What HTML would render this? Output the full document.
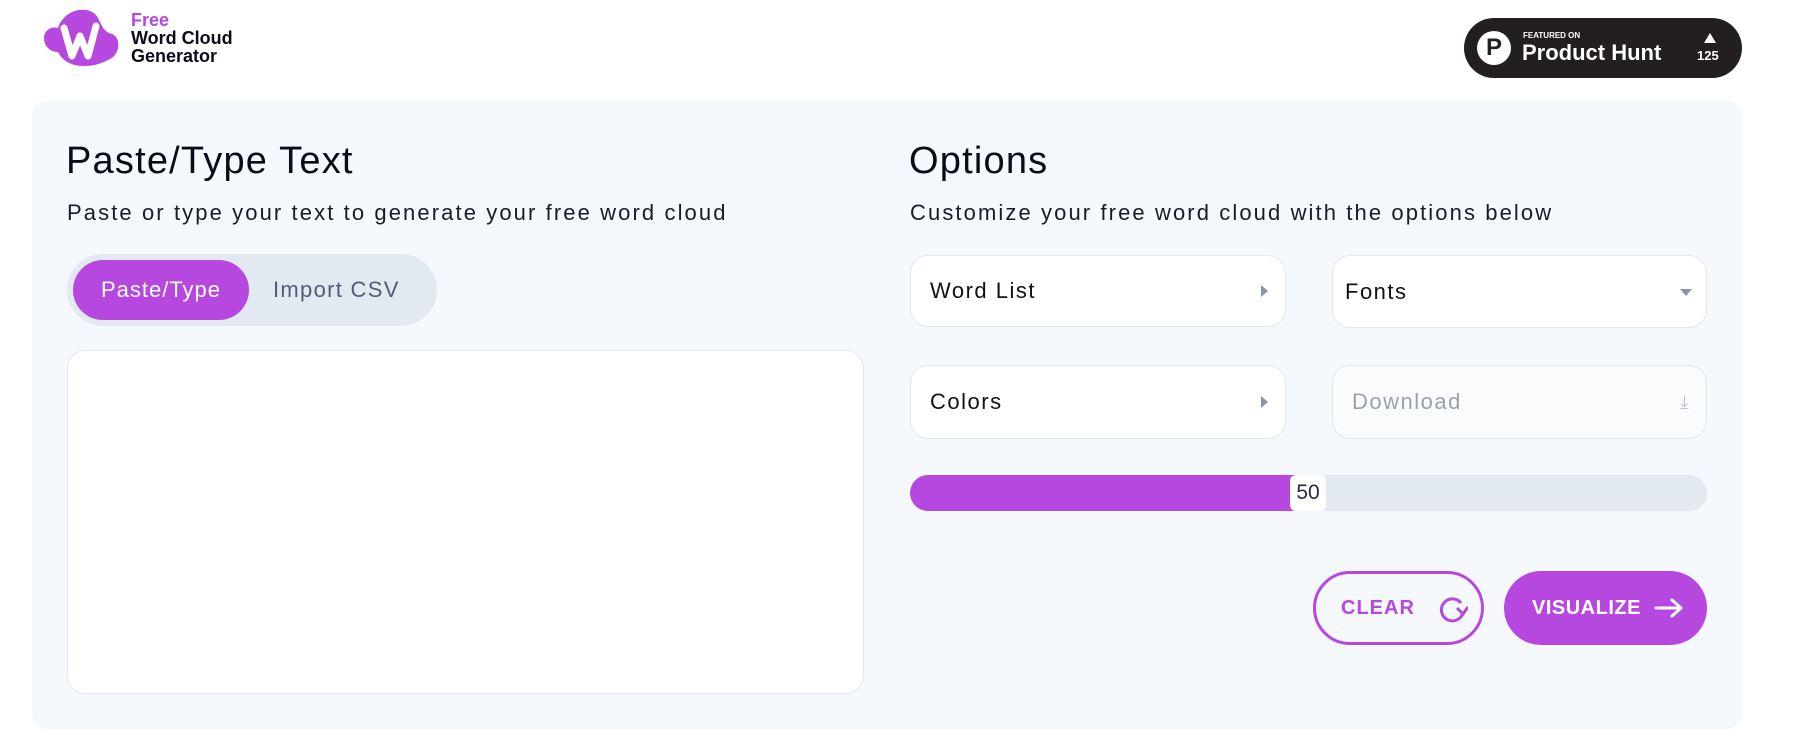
<!DOCTYPE html>
<html><head><meta charset="utf-8"><style>
*{box-sizing:border-box;margin:0;padding:0}
body{width:1806px;height:751px;background:#fff;font-family:"Liberation Sans",sans-serif;position:relative;overflow:hidden;color:#111}
.a{position:absolute}
.panel{left:32px;top:101px;width:1710px;height:628px;background:#f5f8fc;border-radius:14px}
h2{font-weight:500;font-size:38px;color:#0b0b1a;letter-spacing:1.2px}
.sub{font-size:22px;color:#1a1a2a;letter-spacing:2.1px}
.box{background:#fff;border:1px solid #e3e8ef;border-radius:18px;font-size:22px;padding-left:19px;display:flex;align-items:center;letter-spacing:1.5px}
.tri{position:absolute;right:17px;top:50%;margin-top:-6px;width:0;height:0;border-top:6px solid transparent;border-bottom:6px solid transparent;border-left:7px solid #8a94a3}
</style></head><body>
<svg class="a" style="left:42px;top:8px" width="78" height="60" viewBox="0 0 78 60">
<path d="M22 10 C30 0 50 -2 56 10 C60 18 62 24 70 26 C80 30 78 48 66 52 C58 56 52 58 42 58 C28 58 20 52 16 44 C8 44 2 38 2 30 C2 22 10 18 16 20 C17 16 19 13 22 10Z" fill="#b648e0"/>
<path d="M22 20 L30 48 L38 28 L46 48 L54 18" fill="none" stroke="#fff" stroke-width="7" stroke-linecap="round" stroke-linejoin="round"/>
</svg>
<div class="a" style="left:131px;top:11px;font-weight:bold;font-size:18px;line-height:18px;color:#b648e0">Free</div>
<div class="a" style="left:131px;top:29px;font-weight:bold;font-size:18px;line-height:18px;color:#0b0b1a">Word Cloud<br>Generator</div>
<div class="a" style="left:1464px;top:18px;width:278px;height:60px;background:#231f20;border-radius:30px"></div>
<div class="a" style="left:1477px;top:31px;width:34px;height:34px;border-radius:50%;background:#fff;color:#231f20;font-weight:bold;font-size:24px;text-align:center;line-height:34px">P</div>
<div class="a" style="left:1523px;top:31px;color:#fff;font-weight:bold;font-size:8px">FEATURED ON</div>
<div class="a" style="left:1522px;top:40px;color:#fff;font-weight:bold;font-size:22px">Product Hunt</div>
<div class="a" style="left:1704px;top:33px;width:0;height:0;border-left:6px solid transparent;border-right:6px solid transparent;border-bottom:10px solid #fff"></div>
<div class="a" style="left:1697px;top:48px;color:#fff;font-weight:bold;font-size:13px">125</div>

<div class="a panel"></div>
<h2 class="a" style="left:66px;top:140px">Paste/Type Text</h2>
<div class="a sub" style="left:67px;top:200px">Paste or type your text to generate your free word cloud</div>
<div class="a" style="left:67px;top:254px;width:370px;height:72px;background:#e3e9f1;border-radius:36px"></div>
<div class="a" style="left:73px;top:260px;width:176px;height:60px;background:#b648e0;border-radius:30px;color:#fff;font-size:22px;text-align:center;line-height:60px;letter-spacing:1px">Paste/Type</div>
<div class="a" style="left:273px;top:260px;height:60px;line-height:60px;color:#555a78;font-size:22px;letter-spacing:1.3px">Import CSV</div>
<div class="a" style="left:67px;top:350px;width:797px;height:344px;background:#fff;border:1px solid #e3e8ef;border-radius:18px"></div>

<h2 class="a" style="left:909px;top:140px">Options</h2>
<div class="a sub" style="left:910px;top:200px">Customize your free word cloud with the options below</div>
<div class="a box" style="left:910px;top:255px;width:376px;height:72px">Word List<span class="tri"></span></div>
<div class="a box" style="left:1332px;top:255px;width:375px;height:73px;padding-left:12px">Fonts<span class="a" style="right:14px;top:33px;border-left:6px solid transparent;border-right:6px solid transparent;border-top:7px solid #8a94a3;width:0;height:0"></span></div>
<div class="a box" style="left:910px;top:365px;width:376px;height:74px">Colors<span class="tri"></span></div>
<div class="a box" style="left:1332px;top:365px;width:375px;height:74px;background:#fafbfd;color:#9aa0ad">Download<span class="a" style="right:16px;top:26px;font-size:18px;color:#b8bec8">⤓</span></div>
<div class="a" style="left:910px;top:475px;width:797px;height:36px;background:#e3e9f1;border-radius:18px;overflow:hidden"><div style="width:395px;height:36px;background:#b648e0"></div></div>
<div class="a" style="left:1290px;top:475px;width:36px;height:36px;background:#fff;border-radius:6px;font-size:21px;text-align:center;line-height:36px;color:#2a2a3a">50</div>
<div class="a" style="left:1313px;top:571px;width:171px;height:74px;border:3px solid #b648e0;border-radius:37px;color:#b648e0;font-weight:bold;font-size:20px;line-height:68px;padding-left:25px;letter-spacing:1px">CLEAR
<svg class="a" style="left:122px;top:21px" width="30" height="28" viewBox="0 0 30 28"><path d="M23 8 A11 11 0 1 0 25 18" fill="none" stroke="#b648e0" stroke-width="3"/><path d="M19 13 L25 19 L30 12" fill="none" stroke="#b648e0" stroke-width="3"/></svg></div>
<div class="a" style="left:1504px;top:571px;width:203px;height:74px;background:#b648e0;border-radius:37px;color:#fff;font-weight:bold;font-size:20px;line-height:74px;padding-left:28px;letter-spacing:.5px">VISUALIZE
<svg class="a" style="left:150px;top:27px" width="30" height="20" viewBox="0 0 30 20"><path d="M2 10 H27 M18 2 L27 10 L18 18" fill="none" stroke="#fff" stroke-width="3" stroke-linecap="round" stroke-linejoin="round"/></svg></div>
</body></html>
